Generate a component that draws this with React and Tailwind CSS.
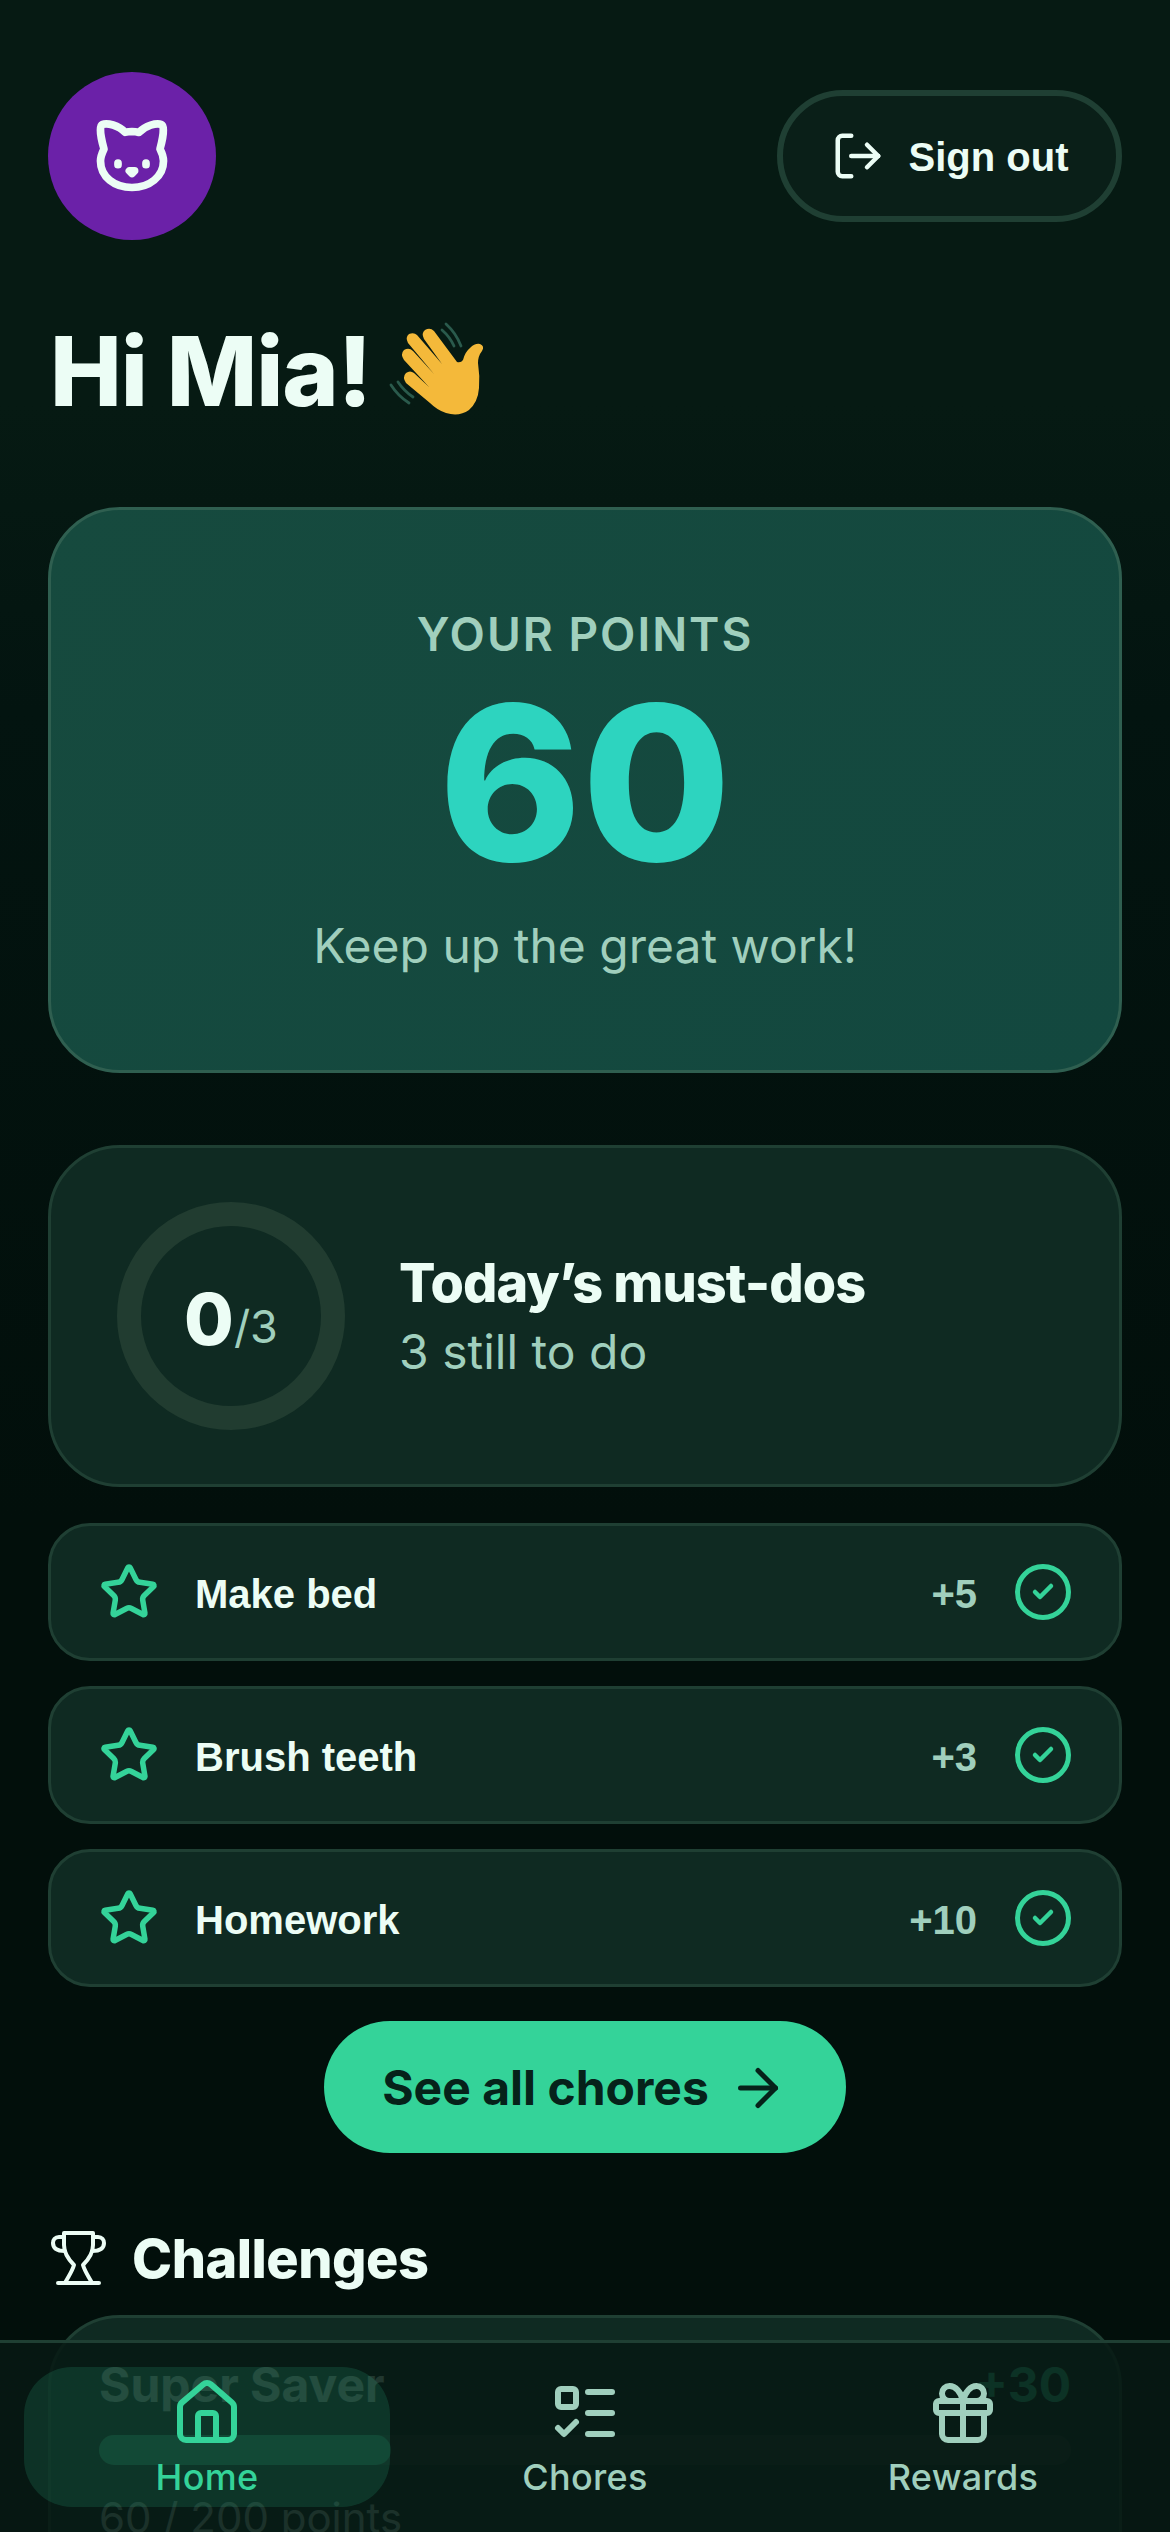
import { ArrowRight, Cat, Check, Gift, House, ListTodo, LogOut, Star } from 'lucide-react';

const sans = "font-['Inter','Liberation_Sans',sans-serif]";
const arial = "font-['Liberation_Sans','Arial',sans-serif]";

const chores = [
  { name: 'Make bed', points: '+5' },
  { name: 'Brush teeth', points: '+3' },
  { name: 'Homework', points: '+10' },
];

function WaveHand() {
  return (
    <svg viewBox="0 0 130 130" className="ml-[3px] -mt-[12px] h-[130px] w-[130px] shrink-0" fill="none">
      <path
        d="M60 31 L83 62 Q87 63 89 60 Q91 52 96 48 Q101 43 106 44 Q111 46 108 51 Q104 56 104 63 Q106 76 105 88 Q104 102 95 110 Q85 117 72 113 Q63 110 56 103 L32 83 Q28 77 32 73 Q36 70 40 73 L55 87 L30 60 Q26 54 30 50 Q35 47 39 51 L60 74 L34 43 Q31 37 35 34 Q40 32 43 35 L68 64 L50 39 Q47 33 51 30 Q56 27 60 31 Z"
        fill="#f4b93a"
      />
      <path d="M72 24Q82 33 87 46M68 30Q76 37 80 46" stroke="#2a5a4c" strokeWidth="2.8" strokeLinecap="round" />
      <path d="M17 85Q24 96 35 103M24 82Q30 91 39 97" stroke="#2a5a4c" strokeWidth="2.8" strokeLinecap="round" />
    </svg>
  );
}

function TrophyIcon() {
  return (
    <svg viewBox="0 0 62 60" className="h-[60px] w-[62px] shrink-0 text-[#ecfdf5]" fill="none" stroke="currentColor" strokeWidth="4" strokeLinecap="round" strokeLinejoin="round">
      <path d="M16 5H45V17C45 26 40 32 35 37C37 44 41 49 44 55M16 17V5M16 17C16 26 21 32 26 37C24 44 20 49 17 55M10 55H51" />
      <path d="M16 9H11C7 9 5 12 5 15C5 20 9 23 17 23M45 9H50C54 9 56 12 56 15C56 20 52 23 44 23" />
    </svg>
  );
}

function ChoreRow({ name, points }) {
  return (
    <div className="flex h-[138px] items-center rounded-[42px] border-[3px] border-[#1f3f33] bg-[#0f2a22] pl-[48px] pr-[48px]">
      <Star size={60} strokeWidth={2.2} className="shrink-0 text-[#34d399]" />
      <span className={`ml-[36px] flex-1 pt-[3px] text-[40px] font-bold text-[#ecfdf5] ${arial}`}>{name}</span>
      <span className={`pt-[3px] text-[40px] font-bold text-[#a0cfbd] ${arial}`}>{points}</span>
      <div className="ml-[38px] flex h-[56px] w-[56px] items-center justify-center rounded-full border-[5px] border-[#34d399]">
        <Check size={24} strokeWidth={4.5} className="text-[#34d399]" />
      </div>
    </div>
  );
}

function NavItem({ icon: Icon, label, active }) {
  return (
    <div className={`flex h-[140px] w-[366px] flex-col items-center rounded-[48px] pt-[10px] ${active ? 'bg-[#34d399]/15 text-[#34d399]' : 'text-[#a0cfbd]'}`}>
      <Icon size={72} strokeWidth={2} />
      <span className="mt-[4px] text-[36px] font-medium leading-[48px] tracking-[0.3px]">{label}</span>
    </div>
  );
}

export default function App() {
  return (
    <div className={`relative h-[2532px] overflow-hidden bg-[linear-gradient(180deg,#061a13_0%,#061a13_16%,#031410_28%,#020f0b_60%,#020f0b_100%)] ${sans}`}>
      <div className="px-[48px] pt-[72px]">
        <header className="flex items-start justify-between">
          <div className="flex h-[168px] w-[168px] items-center justify-center rounded-full bg-[#6b21a8]">
            <Cat size={84} strokeWidth={2.2} className="text-[#ecfdf5]" />
          </div>
          <button className={`mt-[18px] flex h-[132px] w-[345px] items-center justify-center gap-[24px] rounded-full border-[6px] border-[#1f3f33] bg-[#0a1f18] text-[40px] font-bold text-[#ecfdf5] ${arial}`}>
            <LogOut size={54} strokeWidth={2} />
            <span className="pt-[2px]">Sign out</span>
          </button>
        </header>

        <div className="mt-[59px] flex h-[144px] items-center">
          <h1 className="ml-[2px] text-[96px] font-extrabold leading-none tracking-[-1.1px] text-[#ecfdf5]">Hi Mia!</h1>
          <WaveHand />
        </div>

        <section className="mt-[64px] flex h-[566px] flex-col items-center rounded-[72px] border-[3px] border-[#2f5f50] bg-[linear-gradient(135deg,#164a3e,#13483f)] pt-[97px]">
          <p className="text-[46px] font-semibold leading-[54px] tracking-[2px] text-[#a0cfbd]">YOUR POINTS</p>
          <p className="mt-[14px] text-[216px] font-extrabold leading-[216px] text-[#2dd4bf]">60</p>
          <p className="mt-[25px] text-[48px] leading-[60px] text-[#a0cfbd]">Keep up the great work!</p>
        </section>

        <section className="mt-[72px] flex h-[342px] items-center rounded-[72px] border-[3px] border-[#1f3f33] bg-[#0f2a22] pl-[66px]">
          <div className="flex h-[228px] w-[228px] shrink-0 items-center justify-center rounded-full border-[24px] border-[#213c30] pt-[6px]">
            <span className="text-[72px] font-extrabold text-[#ecfdf5]">0</span>
            <span className="mt-[16px] text-[45px] text-[#a0cfbd]">/3</span>
          </div>
          <div className="ml-[54px]">
            <h2 className="text-[54px] font-extrabold leading-[66px] tracking-[-0.9px] text-[#ecfdf5]">Today’s must-dos</h2>
            <p className="mt-[6px] text-[48px] leading-[60px] text-[#a0cfbd]">3 still to do</p>
          </div>
        </section>

        <div className="mt-[36px] flex flex-col gap-[25px]">
          {chores.map((c) => (
            <ChoreRow key={c.name} name={c.name} points={c.points} />
          ))}
        </div>

        <div className="mt-[34px] flex justify-center">
          <button className="flex h-[132px] w-[522px] items-center justify-center gap-[19px] rounded-full bg-[#34d399] pt-[2px] text-[48px] font-bold text-[#06221a]">
            See all chores
            <ArrowRight size={60} strokeWidth={2} />
          </button>
        </div>

        <div className="mt-[72px] flex h-[66px] items-center gap-[22px]">
          <TrophyIcon />
          <h2 className="text-[54px] font-extrabold tracking-[-0.5px] text-[#ecfdf5]">Challenges</h2>
        </div>

        <section className="mt-[24px] h-[400px] rounded-[72px] border-[3px] border-[#1f3f33] bg-[#0f2a22] px-[48px] pt-[31px]">
          <div className="flex items-center justify-between">
            <span className="text-[48px] font-bold text-[#d1fae5]">Super Saver</span>
            <span className="text-[48px] font-bold text-[#34d399]">+30</span>
          </div>
          <div className="mt-[14px] h-[30px] rounded-full bg-[#213c30]">
            <div className="h-full w-[30%] rounded-full bg-[#34d399]" />
          </div>
          <p className="mt-[21px] text-[42px] text-[#a0cfbd]">60 / 200 points</p>
        </section>
      </div>

      <nav className="absolute inset-x-0 bottom-0 flex h-[192px] items-start justify-between border-t-[3px] border-[#1f3f33] bg-[#071913]/[0.87] px-[24px] pt-[24px]">
        <NavItem icon={House} label="Home" active />
        <NavItem icon={ListTodo} label="Chores" />
        <NavItem icon={Gift} label="Rewards" />
      </nav>
    </div>
  );
}
